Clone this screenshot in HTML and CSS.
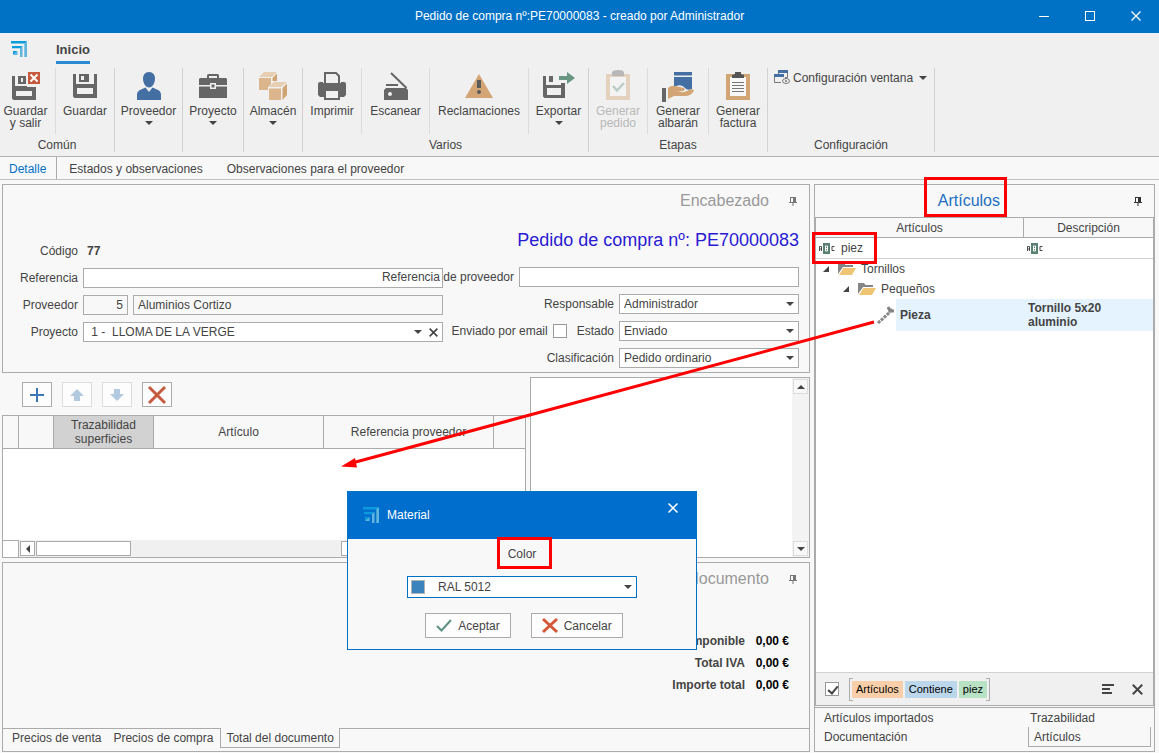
FILE: index.html
```html
<!DOCTYPE html>
<html lang="es">
<head>
    <meta charset="UTF-8">
    <meta name="viewport" content="width=device-width, initial-scale=1.0">
    <title>Pedido de compra</title>
    <link rel="stylesheet" href="styles.css">
</head>
<body>

    <!-- Símbolos compartidos -->
    <svg class="symbols" aria-hidden="true">
        <symbol id="logo" viewBox="0 0 16 16">
            <path d="M0 0H16L14 2.500H0z" fill="#0a9bdc"/>
            <path d="M16 0V16H13.300V2.500z" fill="#5fb5dc"/>
            <path d="M1 5H11.500L9.500 7.300H1z" fill="#0a9bdc"/>
            <path d="M11.500 5V16H9V7.300z" fill="#5fb5dc"/>
            <path d="M2 10H6.500L2 14z" fill="#0a9bdc"/>
            <path d="M6.500 10V14H2z" fill="#5fb5dc"/>
        </symbol>
        <symbol id="pin" viewBox="0 0 8 9">
            <path d="M1 0H7V5H8V6H4.500V9H3.500V6H0V5H1zM2 1V5H4V1z" fill="currentColor" fill-rule="evenodd"/>
        </symbol>
        <symbol id="folder" viewBox="0 0 18 12">
            <path d="M0 0H6L7.500 2H15V4H5L0 11z" fill="#858585"/>
            <path d="M5.500 5H18L14 12H1z" fill="#efc473"/>
        </symbol>
        <symbol id="abc" viewBox="0 0 16 11">
            <rect x="4" width="7" height="11" fill="#5b8272"/>
            <path d="M.5 8V3.500H2.500V8M.5 6H2.500M15.500 3.500H13V7.500H15.500" fill="none" stroke="#4a4a4a"/>
            <path d="M6.500 3H8.500V8H6.500zM6.500 5.500H8.500" fill="none" stroke="#fff"/>
        </symbol>
        <symbol id="cross" viewBox="0 0 10 10">
            <path d="M.7 .7L9.300 9.300M9.300 .7L.7 9.300" fill="none" stroke="currentColor" stroke-width="1.800"/>
        </symbol>
        <symbol id="disk" viewBox="0 0 24 24">
            <path d="M0 0H3V10H21V0H24V24H1.500L0 22.500zM4 14V20H20V14z" fill="#666" fill-rule="evenodd"/>
            <path d="M6 0H16V8H6zM8 2V6H11V2z" fill="#666" fill-rule="evenodd"/>
        </symbol>
    </svg>

    <header class="titlebar">
        <h1>Pedido de compra nº:PE70000083 - creado por Administrador</h1>
        <div class="window-buttons">
            <button aria-label="Minimizar"><svg width="10" height="10"><path d="M0 5.500H10" stroke="#fff"/></svg></button>
            <button aria-label="Maximizar"><svg width="10" height="10"><rect x=".5" y=".5" width="9" height="9" fill="none" stroke="#fff"/></svg></button>
            <button aria-label="Cerrar"><svg width="10" height="10"><path d="M.5 .5L9.500 9.500M9.500 .5L.5 9.500" stroke="#fff" stroke-width="1.300"/></svg></button>
        </div>
    </header>

    <!-- Cinta de opciones -->
    <div class="ribbon">
        <div class="ribbon-tabs">
            <svg class="logo"><use href="#logo"/></svg>
            <a href="#" class="ribbon-tab">Inicio</a>
        </div>
        <div class="ribbon-groups">
            <div class="group common">
                <div class="group-buttons">
                    <button>
                        <svg class="icon" viewBox="0 0 28 28"><path d="M0 4H3V14H15V15H24V28H1.500L0 26.500zM4 19V24H20V19z" fill="#666" fill-rule="evenodd"/><path d="M6 4H14V12H6zM9 6V10H11V6z" fill="#666" fill-rule="evenodd"/><rect x="16" y="0" width="12" height="12" fill="#c65a3d"/><path d="M18.500 2.500L25.500 9.500M25.500 2.500L18.500 9.500" stroke="#fff" stroke-width="1.800"/></svg>
                        <span>Guardar<br>y salir</span>
                    </button>
                    <button>
                        <svg class="icon" viewBox="0 0 28 28"><use href="#disk" x="2" y="2" width="24" height="24"/></svg>
                        <span>Guardar</span>
                    </button>
                </div>
                <div class="group-name">Común</div>
            </div>
            <div class="group">
                <div class="group-buttons">
                    <button>
                        <svg class="icon" viewBox="0 0 28 28"><path d="M14 0C18 0 20 3 20 6.500C20 11 17.500 15.500 14 15.500C10.500 15.500 8 11 8 6.500C8 3 10 0 14 0z" fill="#446fa3"/><path d="M10.500 15.500L14 20L17.500 15.500L23 18C25.500 19.300 26 21 26 23V28H2V23C2 21 2.500 19.300 5 18z" fill="#446fa3"/></svg>
                        <span>Proveedor</span>
                        <i class="caret"></i>
                    </button>
                </div>
            </div>
            <div class="group">
                <div class="group-buttons">
                    <button>
                        <svg class="icon" viewBox="0 0 28 28"><path d="M8 6V3.500Q8 2 9.500 2H18.500Q20 2 20 3.500V6H27L28 7V13H17V11H11V13H0V7L1 6zM10 6H18V4H10z" fill="#666" fill-rule="evenodd"/><path d="M0 14.500H11V17H17V14.500H28V26H0z" fill="#666"/><rect x="12.500" y="12.500" width="3" height="3" fill="#666"/></svg>
                        <span>Proyecto</span>
                        <i class="caret"></i>
                    </button>
                </div>
            </div>
            <div class="group">
                <div class="group-buttons">
                    <button>
                        <svg class="icon" viewBox="0 0 28 28"><path d="M0 6H12V18H0z" fill="#dbb58c"/><path d="M0 5L5 0H18L13 5z" fill="#e5ceb2"/><path d="M13.500 6L18 1.500V9H13.500z" fill="#cfa472"/><path d="M9 15L14.500 9.500H29L24 15.500V29H9z" fill="#f0f0f0"/><path d="M10 15H22L28 10H14.500z" fill="#e5ceb2"/><path d="M10 16.500H22V28H10z" fill="#dbb58c"/><path d="M23.500 16L28 11.500V23L23.500 28z" fill="#cfa472"/></svg>
                        <span>Almacén</span>
                        <i class="caret"></i>
                    </button>
                </div>
            </div>
            <div class="group various">
                <div class="group-buttons">
                    <button>
                        <svg class="icon" viewBox="0 0 28 28"><path d="M0 12Q0 10 2 10H5V12H23V10H26Q28 10 28 12V23L26 25H22V17H6V25H2L0 23z" fill="#666"/><path d="M7 11V1H18L21 4V11M7 18H21V27H7z" fill="none" stroke="#666" stroke-width="2"/><path d="M5 11H23V17H5z" fill="#666"/></svg>
                        <span>Imprimir</span>
                    </button>
                    <button>
                        <svg class="icon" viewBox="0 0 28 28"><path d="M2 18L4 16H24L26 18V28H2z" fill="#666"/><path d="M9 1L24.500 16" stroke="#666" stroke-width="2"/><path d="M4 13H16" stroke="#666" stroke-width="2"/><circle cx="8" cy="22" r="2" fill="#f0f0f0"/></svg>
                        <span>Escanear</span>
                    </button>
                    <button>
                        <svg class="icon" viewBox="0 0 28 28"><path d="M14 2L28 26H0z" fill="#d3a574"/><path d="M12 8H16V16H12z" fill="#5b5b5b"/><circle cx="14" cy="20" r="2" fill="#5b5b5b"/></svg>
                        <span>Reclamaciones</span>
                    </button>
                    <button>
                        <svg class="icon wide" viewBox="0 0 32 28"><path d="M0 4H3V13H18V11H22V26H1.500L0 24.500zM4 16V23H18V16z" fill="#666" fill-rule="evenodd"/><path d="M6 4H10V10H6zM8 5H9V9H8z" fill="#666"/><path d="M16 4H24V0L32 6L24 12V8H16z" fill="#6a9784"/></svg>
                        <span>Exportar</span>
                        <i class="caret"></i>
                    </button>
                </div>
                <div class="group-name">Varios</div>
            </div>
            <div class="group stages">
                <div class="group-buttons">
                    <button disabled>
                        <svg class="icon" viewBox="0 0 28 28"><path d="M2 2H26V28H2z" fill="#d3a574"/><path d="M6 5H22V24H6z" fill="#f8f8f8"/><path d="M8 0Q9 -2 14 -2Q19 -2 20 0V4H8z" fill="#666"/><path d="M9 14L13 18.500L20 11" fill="none" stroke="#6a9784" stroke-width="2.500"/></svg>
                        <span>Generar<br>pedido</span>
                    </button>
                    <button>
                        <svg class="icon wide" viewBox="0 0 32 28"><path d="M12 0H30V3.500H12zM12 5H30V17Q25 19 23 16Q19 11 12 15z" fill="#446fa3"/><path d="M6 16Q9 13 13 14L22 16Q24 18 21 19L16 19.500Q22 21 25 19Q30 16 32 18.500Q29 24 23 24H12L6 27z" fill="#d3a574"/><path d="M0 16H4V30H0z" fill="#666"/></svg>
                        <span>Generar<br>albarán</span>
                    </button>
                    <button>
                        <svg class="icon" viewBox="0 0 28 28"><path d="M2 2H26V28H2z" fill="#d3a574"/><path d="M6 5H22V24H6z" fill="#f8f8f8"/><path d="M8 6V3L11 2V0H17V2L20 3V6z" fill="#555"/><path d="M8 10.500H20M8 13.500H20M8 16.500H20M8 19.500H20" stroke="#777"/></svg>
                        <span>Generar<br>factura</span>
                    </button>
                </div>
                <div class="group-name">Etapas</div>
            </div>
            <div class="group config">
                <button class="small-button">
                    <svg width="16" height="15" viewBox="0 0 16 15"><path d="M4.500 4V.500H13.500V7.500H11M.5 4.500H9.500M.5 4.500V12.500H7" fill="none" stroke="#777"/><path d="M4 0H14V3H4zM0 4H10V7H0z" fill="#446fa3"/><ellipse cx="12" cy="11" rx="3.500" ry="2.500" fill="none" stroke="#777"/><circle cx="12" cy="11" r="1" fill="#777"/></svg>
                    <span>Configuración ventana</span>
                    <i class="caret"></i>
                </button>
                <div class="group-name">Configuración</div>
            </div>
        </div>
    </div>

    <nav class="page-tabs">
        <a href="#" class="active">Detalle</a>
        <a href="#">Estados y observaciones</a>
        <a href="#">Observaciones para el proveedor</a>
    </nav>

    <main class="workspace">
        <div class="document">

            <!-- Encabezado -->
            <section class="panel order">
                <div class="panel-title">
                    <h2>Encabezado</h2>
                    <svg class="pin"><use href="#pin"/></svg>
                </div>
                <div class="order-form">
                    <div class="form-left">
                        <div class="field">
                            <span class="label">Código</span>
                            <output>77</output>
                        </div>
                        <div class="field">
                            <label for="referencia">Referencia</label>
                            <input type="text" id="referencia">
                        </div>
                        <div class="field">
                            <label for="proveedor">Proveedor</label>
                            <input type="text" id="proveedor" class="code" value="5" readonly>
                            <input type="text" aria-label="Nombre del proveedor" value="Aluminios Cortizo" readonly>
                        </div>
                        <div class="field">
                            <label for="proyecto">Proyecto</label>
                            <div class="select clearable">
                                <select id="proyecto"><option>&nbsp;1&nbsp;-&nbsp; LLOMA DE LA VERGE</option></select>
                                <button aria-label="Borrar"><svg width="9" height="9"><use href="#cross"/></svg></button>
                            </div>
                        </div>
                    </div>
                    <div class="form-right">
                        <h3>Pedido de compra nº: PE70000083</h3>
                        <div class="field">
                            <label for="refproveedor">Referencia de proveedor</label>
                            <input type="text" id="refproveedor" class="reference">
                        </div>
                        <div class="field">
                            <label for="responsable">Responsable</label>
                            <div class="select"><select id="responsable"><option>Administrador</option></select></div>
                        </div>
                        <div class="field">
                            <label for="email">Enviado por email</label>
                            <input type="checkbox" id="email">
                            <label for="estado">Estado</label>
                            <div class="select"><select id="estado"><option>Enviado</option></select></div>
                        </div>
                        <div class="field">
                            <label for="clasificacion">Clasificación</label>
                            <div class="select"><select id="clasificacion"><option>Pedido ordinario</option></select></div>
                        </div>
                    </div>
                </div>
            </section>

            <!-- Líneas del pedido -->
            <section class="lines">
                <div class="lines-left">
                    <div class="toolbar">
                        <button aria-label="Añadir"><svg width="14" height="14"><path d="M7 0V14M0 7H14" stroke="#3f76b5" stroke-width="2"/></svg></button>
                        <button aria-label="Subir" disabled><svg width="14" height="12"><path d="M7 0L14 7H10V12H4V7H0z" fill="#b3c9e0"/></svg></button>
                        <button aria-label="Bajar" disabled><svg width="14" height="12"><path d="M7 12L14 5H10V0H4V5H0z" fill="#b3c9e0"/></svg></button>
                        <button aria-label="Eliminar"><svg width="18" height="18"><path d="M1 1L17 17M17 1L1 17" stroke="#c65a3d" stroke-width="3"/></svg></button>
                    </div>
                    <div class="lines-grid">
                        <table>
                            <colgroup><col class="c-mark"><col class="c-state"><col class="c-trace"><col class="c-item"><col class="c-item"><col></colgroup>
                            <thead>
                                <tr><th></th><th></th><th class="sorted">Trazabilidad superficies</th><th>Artículo</th><th>Referencia proveedor</th><th></th></tr>
                            </thead>
                        </table>
                        <div class="hscroll">
                            <span class="corner"></span>
                            <button aria-label="Izquierda"><i class="caret left"></i></button>
                            <span class="thumb"></span>
                            <span class="part"></span>
                        </div>
                    </div>
                </div>
                <div class="notes">
                    <textarea aria-label="Notas"></textarea>
                    <div class="vscroll">
                        <button aria-label="Arriba"><i class="caret up"></i></button>
                        <button aria-label="Abajo"><i class="caret"></i></button>
                    </div>
                </div>
            </section>

            <!-- Totales -->
            <section class="panel totals">
                <div class="panel-title">
                    <h2>Total del documento</h2>
                    <svg class="pin"><use href="#pin"/></svg>
                </div>
                <dl>
                    <dt>Base imponible</dt><dd>0,00 €</dd>
                    <dt>Total IVA</dt><dd>0,00 €</dd>
                    <dt>Importe total</dt><dd>0,00 €</dd>
                </dl>
                <nav class="bottom-tabs">
                    <a href="#">Precios de venta</a>
                    <a href="#">Precios de compra</a>
                    <a href="#" class="active">Total del documento</a>
                </nav>
            </section>
        </div>

        <!-- Artículos -->
        <aside class="panel items">
            <div class="panel-title">
                <h2>Artículos</h2>
                <svg class="pin"><use href="#pin"/></svg>
            </div>
            <div class="tree">
                <table>
                    <colgroup><col class="c-name"><col></colgroup>
                    <thead>
                        <tr><th>Artículos</th><th>Descripción</th></tr>
                    </thead>
                    <tbody>
                        <tr class="filter">
                            <td><div class="cell"><svg width="16" height="11"><use href="#abc"/></svg><input type="text" aria-label="Filtrar artículos" value="piez"></div></td>
                            <td><div class="cell"><svg width="16" height="11"><use href="#abc"/></svg><input type="text" aria-label="Filtrar descripción"></div></td>
                        </tr>
                        <tr>
                            <td><div class="cell level-1"><i class="expander"></i><svg width="18" height="12"><use href="#folder"/></svg>Tornillos</div></td>
                            <td></td>
                        </tr>
                        <tr>
                            <td><div class="cell level-2"><i class="expander"></i><svg width="18" height="12"><use href="#folder"/></svg>Pequeños</div></td>
                            <td></td>
                        </tr>
                        <tr class="selected">
                            <td><div class="cell level-3"><svg width="20" height="20"><path d="M2 18L14 7" stroke="#8a8a8a" stroke-width="3" stroke-dasharray="3 1"/><path d="M12 2L14 6L18 6M13 7L16 4" fill="none" stroke="#858585" stroke-width="3"/></svg><b>Pieza</b></div></td>
                            <td class="description">Tornillo 5x20 aluminio</td>
                        </tr>
                    </tbody>
                </table>
                <div class="filter-bar">
                    <input type="checkbox" aria-label="Filtro activo" checked>
                    <div class="condition"><span class="tag name">Artículos</span><span class="tag operator">Contiene</span><span class="tag value">piez</span></div>
                    <button aria-label="Editar filtro"><svg width="13" height="10"><path d="M1 1H13M1 5H9M1 9H11" stroke="#444" stroke-width="2"/></svg></button>
                    <button aria-label="Quitar filtro"><svg width="11" height="11"><use href="#cross"/></svg></button>
                </div>
            </div>
            <nav class="side-tabs">
                <a href="#">Artículos importados</a>
                <a href="#">Trazabilidad</a>
                <a href="#">Documentación</a>
                <a href="#" class="active">Artículos</a>
            </nav>
        </aside>
    </main>

    <!-- Selección del color -->
    <div class="dialog" role="dialog" aria-labelledby="dialog-title">
        <div class="dialog-header">
            <svg class="logo"><use href="#logo"/></svg>
            <h2 id="dialog-title">Material</h2>
            <button aria-label="Cerrar"><svg width="10" height="10"><path d="M.5 .5L9.500 9.500M9.500 .5L.5 9.500" stroke="#fff" stroke-width="1.500"/></svg></button>
        </div>
        <div class="dialog-body">
            <label for="color">Color</label>
            <div class="select color">
                <span class="swatch"></span>
                <select id="color"><option>RAL 5012</option></select>
            </div>
            <div class="dialog-buttons">
                <button><svg width="16" height="13"><path d="M1 7L5.500 11.500L15 1" fill="none" stroke="#5f9180" stroke-width="2"/></svg>Aceptar</button>
                <button><svg width="16" height="15"><path d="M1 1L15 14M15 1L1 14" stroke="#d4573a" stroke-width="3"/></svg>Cancelar</button>
            </div>
        </div>
    </div>

    <!-- Marcas de ayuda sobre la ventana -->
    <svg class="marks" width="1159" height="753" aria-hidden="true">
        <rect x="925.500" y="178.500" width="80" height="37"/>
        <rect x="813.500" y="233.500" width="62" height="29"/>
        <rect x="498.500" y="538.500" width="52" height="29"/>
        <path d="M874 322L352 463"/>
        <path class="head" d="M341 466.500L355 458L357 467.500z"/>
    </svg>

</body>
</html>
```
FILE: styles.css
```css
* {
    box-sizing: border-box;
}
body {
    margin: 0;
    min-height: 100vh;
    display: flex;
    flex-direction: column;
    background-color: #f8f8f8;
    color: #444;
    font-family: "Liberation Sans", Arial, sans-serif;
    font-size: 12px;
    line-height: 14px;
}
h1, h2, h3, dl, dd {
    margin: 0;
    font-size: 12px;
    font-weight: normal;
}
a {
    color: inherit;
    text-decoration: none;
}
button, input, select, textarea {
    margin: 0;
    padding: 0;
    font: inherit;
    color: inherit;
    border: none;
    border-radius: 0;
    background: none;
}
svg {
    display: block;
    flex: none;
    overflow: visible;
}
.symbols {
    position: absolute;
    width: 0;
    height: 0;
}
.logo {
    width: 16px;
    height: 16px;
}
.caret {
    display: block;
    border: 4px solid transparent;
    border-top-color: #444;
    border-bottom: none;
}
.caret.up {
    border-top: none;
    border-bottom: 4px solid #444;
}
.caret.left {
    border: 4px solid transparent;
    border-left: none;
    border-right-color: #444;
}

/* Barra de título */
.titlebar {
    display: grid;
    grid-template-columns: 138px 1fr 138px;
    align-items: center;
    height: 33px;
    padding-bottom: 2px;
    background-color: #0072c6;
    color: #fff;
}
.titlebar h1 {
    grid-column: 2;
    text-align: center;
}
.window-buttons {
    display: flex;
}
.window-buttons button {
    width: 46px;
    height: 30px;
    display: grid;
    place-items: center;
}

/* Cinta */
.ribbon {
    background-color: #f0f0f0;
    border-bottom: 1px solid #b4b4b4;
}
.ribbon-tabs {
    display: flex;
    gap: 29px;
    align-items: center;
    height: 31px;
    padding-left: 11px;
}
.ribbon-tab {
    height: 31px;
    padding-top: 10px;
    border-bottom: 3px solid #2a8ad4;
    font-size: 13px;
    font-weight: bold;
}
.ribbon-groups {
    display: grid;
    grid-template-columns: 115px 68px 61px 59px 286px 179px 167px;
    margin-top: 4px;
    padding-bottom: 4px;
}
.group {
    display: flex;
    flex-direction: column;
    justify-content: space-between;
    height: 84px;
    border-right: 1px solid #d2d2d2;
}
.group-buttons {
    display: grid;
    height: 66px;
}
.common .group-buttons {
    grid-template-columns: 56px 1fr;
}
.various .group-buttons {
    grid-template-columns: 59px 68px 99px 1fr;
}
.stages .group-buttons {
    grid-template-columns: 59px 61px 1fr;
}
.group-buttons button {
    display: flex;
    flex-direction: column;
    align-items: center;
    padding-top: 4px;
    line-height: 12px;
}
.common button:first-child {
    padding-right: 4px;
}
.group-buttons button:not(:last-child) {
    border-right: 1px solid #dcdcdc;
}
.icon {
    width: 28px;
    height: 28px;
    margin-bottom: 5px;
}
.icon.wide {
    width: 32px;
}
.group-buttons .caret {
    margin-top: 4px;
}
.group-buttons button:disabled {
    color: #b8b8b8;
}
.group-buttons button:disabled svg {
    opacity: 0.4;
}
.group-name {
    text-align: center;
}
.small-button {
    display: flex;
    align-items: center;
    gap: 3px;
    padding: 2px 6px;
}
.small-button .caret {
    margin-left: 3px;
}

/* Pestañas */
.page-tabs {
    display: flex;
    height: 23px;
    border-bottom: 1px solid #c0c0c0;
}
.page-tabs a {
    padding: 5px 12px 0;
}
.page-tabs .active {
    padding: 5px 10px 0 9px;
    border-right: 1px solid #ababab;
    color: #0072c6;
}

/* Zona de trabajo */
.workspace {
    flex: 1;
    display: grid;
    grid-template-columns: 1fr 341px;
    gap: 4px;
    padding: 4px 4px 1px 2px;
}
.document {
    display: flex;
    flex-direction: column;
    gap: 4px;
}
.panel {
    border: 1px solid #ababab;
}
.panel-title {
    display: flex;
    justify-content: flex-end;
    align-items: center;
    gap: 20px;
    height: 32px;
    padding-right: 12px;
    color: #999;
}
.panel-title h2 {
    font-size: 16px;
    line-height: 20px;
}
.pin {
    width: 8px;
    height: 9px;
    color: #777;
}
.order {
    height: 189px;
}
.order-form {
    display: grid;
    grid-template-columns: 1fr 356px;
    padding-right: 10px;
}
.form-left, .form-right {
    display: flex;
    flex-direction: column;
    gap: 7px;
}
.form-left {
    padding-top: 24px;
}
.form-right h3 {
    height: 43px;
    padding-top: 13px;
    color: #2a1ad2;
    font-size: 18px;
    line-height: 20px;
    text-align: right;
    white-space: nowrap;
}
.field {
    display: flex;
    align-items: center;
    gap: 5px;
    height: 20px;
}
.form-right .field {
    position: relative;
    justify-content: flex-end;
}
.field label, .label {
    white-space: nowrap;
}
.form-left label, .label {
    width: 75px;
    text-align: right;
}
output {
    padding-left: 4px;
    font-weight: bold;
}
.field input[type="text"] {
    flex: 1;
    min-width: 0;
    height: 20px;
    padding: 0 4px;
    border: 1px solid #ababab;
    background-color: #fff;
}
.field input[readonly] {
    background-color: #f8f8f8;
}
.field input.code {
    flex: 0 0 45px;
    text-align: right;
}
.field input.reference {
    flex: 0 0 280px;
}
input[type="checkbox"] {
    appearance: none;
    position: relative;
    width: 14px;
    height: 14px;
    margin-right: 5px;
    border: 1px solid #999;
    background-color: #fff;
}
input[type="checkbox"]:checked::after {
    content: "";
    position: absolute;
    left: 4px;
    top: 1px;
    width: 4px;
    height: 8px;
    border: solid #444;
    border-width: 0 2px 2px 0;
    transform: rotate(40deg);
}
.select {
    position: relative;
    display: flex;
    align-items: center;
    width: 180px;
    height: 20px;
    border: 1px solid #ababab;
    background-color: #fff;
}
.select select {
    appearance: none;
    flex: 1;
    align-self: stretch;
    padding: 0 20px 0 4px;
}
.select::after {
    content: "";
    position: absolute;
    right: 4px;
    border: 4px solid transparent;
    border-top-color: #444;
    border-bottom: none;
    pointer-events: none;
}
.select.clearable {
    flex: 1;
    padding-right: 4px;
}
.clearable::after {
    right: 20px;
}

/* Líneas */
.lines {
    flex: 1;
    display: grid;
    grid-template-columns: 1fr 280px;
    gap: 4px;
}
.lines-left {
    display: flex;
    flex-direction: column;
}
.toolbar {
    display: flex;
    gap: 10px;
    padding: 5px 20px 8px;
}
.toolbar button {
    display: grid;
    place-items: center;
    width: 30px;
    height: 25px;
    border: 1px solid #ababab;
    background-color: #fdfdfd;
}
.toolbar button:disabled {
    border-color: #dcdcdc;
}
.lines-grid {
    flex: 1;
    display: flex;
    flex-direction: column;
    justify-content: space-between;
    border: 1px solid #ababab;
    background-color: #fff;
}
table {
    width: 100%;
    border-collapse: separate;
    border-spacing: 0;
    table-layout: fixed;
}
th {
    padding: 0;
    border: 1px solid #ababab;
    border-width: 0 1px 1px 0;
    background-color: #f8f8f8;
    font-weight: normal;
}
th:last-child {
    border-right: none;
}
.lines th {
    height: 33px;
}
.lines .sorted {
    background-color: #d2d2d2;
}
.c-mark {
    width: 16px;
}
.c-state {
    width: 35px;
}
.c-trace {
    width: 100px;
}
.c-item {
    width: 170px;
}
.hscroll {
    display: flex;
    align-items: center;
    gap: 1px;
    height: 17px;
    background-color: #f0f0f0;
}
.hscroll .corner {
    width: 16px;
    height: 17px;
    border: 1px solid #ababab;
    border-width: 1px 1px 0 0;
    background-color: #fff;
}
.hscroll button, .thumb, .part {
    display: grid;
    place-items: center;
    width: 15px;
    height: 15px;
    border: 1px solid #ababab;
    background-color: #fff;
}
.hscroll .thumb {
    width: 95px;
}
.hscroll .part {
    width: 170px;
    margin-left: auto;
    margin-right: 14px;
}
.notes {
    display: flex;
    border: 1px solid #ababab;
    background-color: #fff;
}
.notes textarea {
    flex: 1;
    min-width: 0;
    resize: none;
}
.vscroll {
    display: flex;
    flex-direction: column;
    justify-content: space-between;
    padding: 1px;
    background-color: #f3f3f3;
}
.vscroll button {
    display: grid;
    place-items: center;
    width: 15px;
    height: 15px;
    border: 1px solid #dcdcdc;
    background-color: #f8f8f8;
}

/* Totales */
.totals {
    display: flex;
    flex-direction: column;
    height: 190px;
}
.totals dl {
    flex: 1;
    display: grid;
    grid-template-columns: 1fr 34px;
    align-content: start;
    gap: 8px 10px;
    padding: 39px 20px 0 0;
    text-align: right;
}
.totals dt, .totals dd {
    font-weight: bold;
    white-space: nowrap;
}
.totals dd {
    color: #000;
}
.bottom-tabs {
    display: flex;
    height: 23px;
    padding-left: 3px;
    border-top: 1px solid #ababab;
}
.bottom-tabs a {
    padding: 2px 6px;
}
.bottom-tabs .active {
    height: 20px;
    margin: -1px 0 0 1px;
    padding: 3px 5px 0;
    border: 1px solid #ababab;
    border-top: none;
    background-color: #f8f8f8;
}

/* Panel de artículos */
.items {
    display: flex;
    flex-direction: column;
}
.items h2 {
    margin-right: 114px;
    color: #1d6fc0;
}
.items .pin {
    color: #333;
}
.tree {
    flex: 1;
    display: flex;
    flex-direction: column;
    justify-content: space-between;
    border: 1px solid #ababab;
    background-color: #fff;
}
.c-name {
    width: 208px;
}
.tree th {
    height: 20px;
}
.tree td {
    height: 20px;
    padding: 0;
}
.tree .filter td {
    height: 21px;
    border-bottom: 1px solid #d2d2d2;
}
.cell {
    display: flex;
    align-items: center;
    gap: 5px;
    padding-left: 3px;
}
.cell input {
    flex: 1;
    min-width: 0;
    padding-left: 1px;
}
.expander {
    border: 3px solid #444;
    border-top-color: transparent;
    border-left-color: transparent;
    margin-right: 4px;
}
.level-1 {
    padding-left: 7px;
}
.level-2 {
    padding-left: 27px;
}
.level-3 {
    padding-left: 60px;
    gap: 0;
}
.level-3 b {
    flex: 1;
    padding: 9px 4px;
    background-color: #e5f3ff;
}
.tree .description {
    padding: 2px 40px 2px 4px;
    background-color: #e5f3ff;
    font-weight: bold;
}
.filter-bar {
    display: flex;
    align-items: center;
    gap: 10px;
    height: 33px;
    padding: 0 6px 0 9px;
    border-top: 1px solid #d2d2d2;
    background-color: #f0f0f0;
}
.filter-bar input {
    margin: 0;
}
.condition {
    position: relative;
    display: flex;
    gap: 2px;
    margin-right: auto;
    padding: 3px 2px;
    border: 1px solid #ababab;
    border-width: 0 1px;
    font-size: 11px;
}
.condition::before, .condition::after {
    content: "";
    position: absolute;
    top: 0;
    bottom: 0;
    left: 0;
    width: 3px;
    border: 1px solid #ababab;
    border-width: 1px 0;
}
.condition::after {
    left: auto;
    right: 0;
}
.tag {
    height: 17px;
    padding: 1px 4px;
    border-radius: 1px;
    color: #000;
}
.tag.name {
    background-color: #f9cfa9;
}
.tag.operator {
    background-color: #bcd7eb;
}
.tag.value {
    background-color: #b9e2c5;
}
.filter-bar button {
    padding: 4px;
}
.side-tabs {
    display: grid;
    grid-template-columns: 1fr 123px;
    height: 44px;
    margin-top: 1px;
    padding: 0 3px 4px 9px;
    border-top: 1px solid #ababab;
}
.side-tabs a {
    padding-top: 3px;
}
.side-tabs a:nth-child(2) {
    padding-left: 2px;
}
.side-tabs .active {
    padding-left: 5px;
    border: 1px solid #ababab;
    border-top: none;
}

/* Diálogo */
.dialog {
    position: absolute;
    left: 347px;
    top: 491px;
    width: 350px;
    border: 1px solid #0072c6;
    background-color: #f8f8f8;
}
.dialog-header {
    display: flex;
    align-items: center;
    gap: 8px;
    height: 47px;
    padding: 0 14px 1px 15px;
    background-color: #006ecc;
    color: #fff;
}
.dialog-header button {
    align-self: flex-start;
    margin-left: auto;
    padding: 11px 4px;
}
.dialog-body {
    display: flex;
    flex-direction: column;
    align-items: center;
    padding: 8px 0 11px;
}
.select.color {
    width: 230px;
    height: 22px;
    margin: 15px 0;
    border-color: #0072c6;
}
.swatch {
    width: 14px;
    height: 14px;
    margin-left: 3px;
    border: 1px solid #b4b4b4;
    background-color: #3b83bd;
}
.select.color select {
    padding-left: 13px;
}
.dialog-buttons {
    display: flex;
    gap: 20px;
    margin-left: 4px;
}
.dialog-buttons button {
    display: flex;
    align-items: center;
    gap: 6px;
    height: 25px;
    padding: 0 10px;
    border: 1px solid #ababab;
    background-color: #fdfdfd;
}

/* Marcas rojas */
.marks {
    position: absolute;
    left: 0;
    top: 0;
    fill: none;
    stroke: #f00;
    stroke-width: 3;
    pointer-events: none;
}
.marks .head {
    fill: #f00;
    stroke: none;
}
```
